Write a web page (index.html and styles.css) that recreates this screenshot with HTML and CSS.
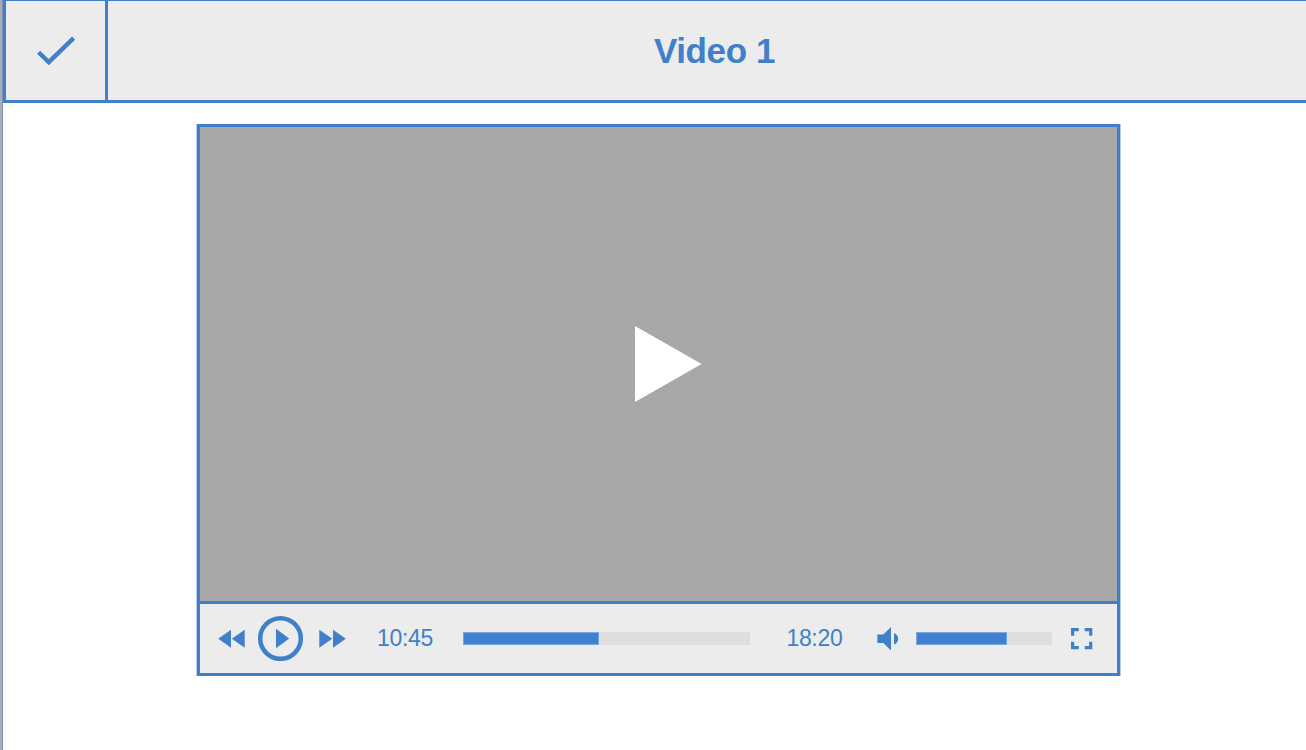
FILE: index.html
```html
<!DOCTYPE html>
<html lang="en">
<head>
<meta charset="utf-8">
<title>Video 1</title>
<link rel="stylesheet" href="styles.css">
</head>
<body>
<div class="page">
  <header class="header">
    <button class="check" aria-label="Done">
      <svg width="40" height="32" viewBox="0 0 40 32"><path d="M2.6 17.2 L12.8 27.2 L37.6 3.1" fill="none" stroke="currentColor" stroke-width="4.4"/></svg>
    </button>
    <h1 class="title">Video 1</h1>
  </header>
  <main class="player">
    <div class="screen">
      <svg class="big-play" width="67" height="76" viewBox="0 0 67 76"><path d="M0 0 L66.6 38 L0 76z" fill="#fff"/></svg>
    </div>
    <div class="controls">
      <svg class="rewind" width="27" height="19" viewBox="0 0 27 19"><path d="M13 .8v18L0.2 9.8zM26.7 .8v18L13.8 9.8z" fill="currentColor"/></svg>
      <svg class="play" width="46" height="46" viewBox="0 0 46 46"><circle cx="23.5" cy="23.5" r="20.3" fill="none" stroke="currentColor" stroke-width="4.5"/><path d="M19 13.7L32.2 23.5L19 33.2z" fill="currentColor"/></svg>
      <svg class="forward" width="27" height="19" viewBox="0 0 27 19"><path d="M0.3 .8v18L13.2 9.8zM14 .8v18L26.8 9.8z" fill="currentColor"/></svg>
      <span class="time elapsed">10:45</span>
      <div class="bar progress"><div class="fill" style="width:136px"></div></div>
      <span class="time total">18:20</span>
      <svg class="speaker" width="22" height="25" viewBox="0 0 22 25"><path d="M0.3 8.6h6L14 1v23.6L6.3 17h-6zM17 7.2c1 0 4.2 1.8 4.2 5.6s-3.2 5.6-4.2 5.6z" fill="currentColor"/></svg>
      <div class="bar volume"><div class="fill" style="width:91px"></div></div>
      <svg class="fullscreen" width="22" height="22" viewBox="0 0 22 22"><path d="M1.6 7.8V1.6H7.8M13.7 1.6h6V7.8M19.7 13.7v6H13.7M7.8 19.7H1.6V13.7" fill="none" stroke="currentColor" stroke-width="3.2"/></svg>
    </div>
  </main>
</div>
</body>
</html>
```
FILE: styles.css
```css
* { box-sizing: border-box; }
html, body { margin: 0; height: 100%; overflow: hidden; }
body {
  background: #fff;
  color: #4080c8;
  font-family: "Liberation Sans", Arial, sans-serif;
}
svg { display: block; flex: none; }
.page {
  height: 750px;
  border-left: 2px solid #aaacb4;
  box-shadow: inset 1px 0 #7f91b4;
  padding-left: 1px;
}
.header {
  display: flex;
  width: 1319px;
  height: 103px;
  background: #ececec;
  border: 3px solid #4080c8;
  border-top-width: 1px;
}
.check {
  display: flex;
  flex: none;
  width: 102px;
  padding: 34px 0 0 30px;
  border: 0;
  border-right: 3px solid #4080c8;
  background: none;
  color: inherit;
}
.title {
  flex: 1;
  margin: 0;
  padding-left: 2px;
  text-align: center;
  font-size: 35px;
  letter-spacing: -0.4px;
  line-height: 100px;
}
.player {
  width: 923px;
  height: 552px;
  margin: 21px 0 0 194px;
  border: 3px solid #4080c8;
  box-shadow: -1px 0 0 #b4cdea, 1px 0 0 #b4cdea;
}
.screen {
  display: flex;
  height: 477px;
  padding: 199px 0 0 435px;
  background: #a8a8a8;
  border-bottom: 3px solid #4080c8;
}
.controls {
  display: flex;
  align-items: center;
  height: 69px;
  padding: 0 0 1px 18px;
  background: #ececec;
}
.play { margin-left: 12px; }
.forward { margin-left: 16px; }
.time {
  width: 58px;
  padding-left: 1px;
  font-size: 23px;
  letter-spacing: -0.3px;
  line-height: 26px;
}
.elapsed { margin-left: 30px; }
.bar {
  flex: none;
  height: 13px;
  margin-top: 1px;
  background: #dedede;
}
.fill {
  height: 100%;
  background: #3f81cf;
  border: 1px solid #79a6dc;
}
.progress { width: 287px; margin-left: 29px; }
.total { margin-left: 36px; padding-left: 0.4px; }
.speaker { margin-left: 33px; }
.volume { width: 136px; margin-left: 17px; }
.fullscreen { margin: 2px 0 0 19px; }
```
